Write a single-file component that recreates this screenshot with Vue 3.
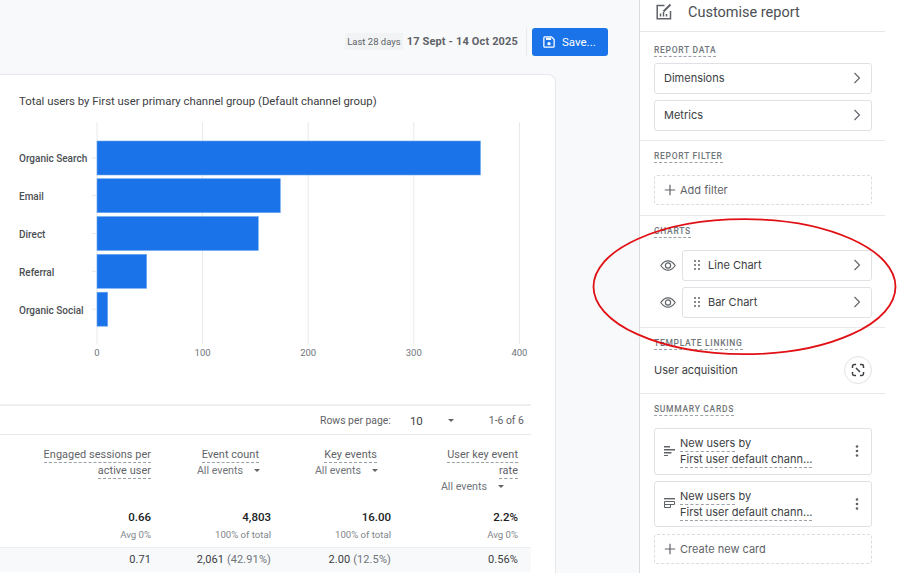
<script setup>
const bars = [
  { label: 'Organic Search', y: 141, end: 480.5, base: 162 },
  { label: 'Email', y: 178.7, end: 280.3, base: 200 },
  { label: 'Direct', y: 216.5, end: 258.3, base: 238 },
  { label: 'Referral', y: 254.3, end: 146.7, base: 276 },
  { label: 'Organic Social', y: 292.2, end: 107.7, base: 314 },
]
const ticks = [
  { label: '0', x: 97 },
  { label: '100', x: 202.6 },
  { label: '200', x: 308.2 },
  { label: '300', x: 413.8 },
  { label: '400', x: 519.4 },
]
const columns = [
  { lines: ['Engaged sessions per', 'active user'], total: '0.66', sub: 'Avg 0%', value: '0.71', pct: '' },
  { lines: ['Event count'], select: true, inset: 'inset-a', total: '4,803', sub: '100% of total', value: '2,061', pct: '(42.91%)' },
  { lines: ['Key events'], select: true, inset: 'inset-b', total: '16.00', sub: '100% of total', value: '2.00', pct: '(12.5%)' },
  { lines: ['User key event', 'rate'], select: true, selectInset: 'inset-c', total: '2.2%', sub: 'Avg 0%', value: '0.56%', pct: '' },
]
const charts = ['Line Chart', 'Bar Chart']
</script>

<template>
  <div class="page">
    <div class="frame">
      <main class="main">
        <div class="toolbar">
          <span class="chip">Last 28 days</span>
          <span class="dates">17 Sept - 14 Oct 2025</span>
          <span class="tool-divider"></span>
          <button class="save">
            <svg width="12" height="12" viewBox="0 0 14 14">
              <path d="M2 1h8l3 3v8a1 1 0 0 1-1 1H2a1 1 0 0 1-1-1V2a1 1 0 0 1 1-1z" fill="none" stroke="#fff" stroke-width="1.5" />
              <rect x="3.5" y="2" width="6" height="2.6" fill="#fff" />
              <circle cx="7" cy="9" r="1.9" fill="#fff" />
            </svg>
            Save...
          </button>
        </div>

        <section class="card">
          <h2 class="chart-title">Total users by First user primary channel group (Default channel group)</h2>
          <svg class="chart" width="531" height="292" viewBox="0 112 531 292">
            <line v-for="t in ticks" :key="t.label" :x1="t.x" :x2="t.x" y1="122" y2="344" class="grid" />
            <g v-for="b in bars" :key="b.label">
              <line x1="92" x2="97" :y1="b.y + 17" :y2="b.y + 17" class="grid" />
              <rect x="97" :y="b.y" :width="b.end - 97" height="34" class="bar" />
              <text x="19" :y="b.base" class="cat">{{ b.label }}</text>
            </g>
            <text v-for="t in ticks" :key="'l' + t.label" :x="t.x" y="356" text-anchor="middle" class="tick">{{ t.label }}</text>
          </svg>

          <div class="pager">
            <span>Rows per page:</span>
            <span class="pager-size">10</span>
            <span class="caret pager-caret"></span>
            <span class="pager-range">1-6 of 6</span>
          </div>

          <div class="table">
            <div v-for="c in columns" :key="c.total" class="head">
              <div :class="['head-lines', c.inset]">
                <div v-for="l in c.lines" :key="l" class="head-line"><span class="dash">{{ l }}</span></div>
              </div>
              <div v-if="c.select" :class="['select', c.inset, c.selectInset]">All events<span class="caret"></span></div>
            </div>
            <div v-for="c in columns" :key="'t' + c.total" class="total">
              <strong>{{ c.total }}</strong>
              <small>{{ c.sub }}</small>
            </div>
            <div class="row">
              <div v-for="c in columns" :key="'r' + c.total" class="cell">
                {{ c.value }} <span v-if="c.pct" class="pct">{{ c.pct }}</span>
              </div>
            </div>
          </div>
        </section>
      </main>

      <aside class="panel">
        <header class="panel-head">
          <svg width="18" height="18" viewBox="0 0 18 18" fill="none" stroke="#5f6368">
            <path d="M9.5 2.5H2.2v13.3h13.3V8" stroke-width="1.5" />
            <path d="M8.5 8.5l7-7" stroke-width="2" />
            <path d="M5.5 13.5v-3M8.5 13.5v-4.5M11.5 13.5v-2.5" stroke-width="1.5" />
          </svg>
          <h1>Customise report</h1>
        </header>

        <section class="group g-data">
          <div class="label"><span class="dash">REPORT DATA</span></div>
          <div class="box nav">Dimensions
            <svg class="chev" width="9" height="12" viewBox="0 0 9 12"><path d="M1.5 1l5 5-5 5" /></svg>
          </div>
          <div class="box nav">Metrics
            <svg class="chev" width="9" height="12" viewBox="0 0 9 12"><path d="M1.5 1l5 5-5 5" /></svg>
          </div>
        </section>

        <section class="group g-filter">
          <div class="label"><span class="dash">REPORT FILTER</span></div>
          <div class="box add">
            <svg class="plus" width="12" height="12" viewBox="0 0 12 12"><path d="M6 .8v10.4M.8 6h10.4" /></svg>
            Add filter
          </div>
        </section>

        <section class="group g-charts">
          <div class="label"><span class="dash">CHARTS</span></div>
          <div v-for="c in charts" :key="c" class="chart-row">
            <svg width="16" height="11" viewBox="0 0 16 11" fill="none" stroke="#5f6368" stroke-width="1.2">
              <path d="M.8 5.5C3 2.3 5.3.8 8 .8s5 1.5 7.2 4.7C13 8.7 10.7 10.2 8 10.2S3 8.7.8 5.5z" />
              <circle cx="8" cy="5.5" r="2.6" />
            </svg>
            <div class="box nav chart-box">
              <span class="chart-name">
                <svg width="6" height="10" viewBox="0 0 6 10" fill="#5f6368">
                  <circle cx="1" cy="1" r="1" /><circle cx="5" cy="1" r="1" />
                  <circle cx="1" cy="5" r="1" /><circle cx="5" cy="5" r="1" />
                  <circle cx="1" cy="9" r="1" /><circle cx="5" cy="9" r="1" />
                </svg>
                {{ c }}
              </span>
              <svg class="chev" width="9" height="12" viewBox="0 0 9 12"><path d="M1.5 1l5 5-5 5" /></svg>
            </div>
          </div>
        </section>

        <section class="group g-link">
          <div class="label"><span class="dash">TEMPLATE LINKING</span></div>
          <div class="link-row">
            <span>User acquisition</span>
            <span class="link-btn">
              <svg width="14" height="14" viewBox="0 0 14 14" fill="none" stroke="#3c4043" stroke-width="1.5">
                <path d="M5 1.5H3.2A1.7 1.7 0 0 0 1.5 3.2V5M9 1.5h1.8a1.7 1.7 0 0 1 1.7 1.7V5M1.5 9v1.8a1.7 1.7 0 0 0 1.7 1.7H5M12.5 9v1.8a1.7 1.7 0 0 1-1.7 1.7H9M5 5l4 4" />
              </svg>
            </span>
          </div>
        </section>

        <section class="group g-cards">
          <div class="label"><span class="dash">SUMMARY CARDS</span></div>
          <div class="box summary">
            <svg width="11" height="10" viewBox="0 0 11 10" fill="#5f6368">
              <rect x="0" y="0" width="6" height="1.5" /><rect x="0" y="3" width="11" height="1.5" />
              <rect x="0" y="6" width="7.5" height="1.5" /><rect x="0" y="9" width="4" height="1" />
            </svg>
            <div class="summary-text">
              <div><span class="dash">New users</span> by</div>
              <div><span class="dash">First user default chann...</span></div>
            </div>
            <svg class="kebab" width="4" height="12" viewBox="0 0 4 12" fill="#5f6368">
              <circle cx="2" cy="1.5" r="1.3" /><circle cx="2" cy="6" r="1.3" /><circle cx="2" cy="10.5" r="1.3" />
            </svg>
          </div>
          <div class="box summary">
            <svg width="11" height="11" viewBox="0 0 11 11" fill="none" stroke="#5f6368">
              <path d="M0 .7h11" stroke-width="1.4" />
              <path d="M.5 3.5h10v3H.5zM.5 6.5h6v3h-6z" stroke-width="1" />
            </svg>
            <div class="summary-text">
              <div><span class="dash">New users</span> by</div>
              <div><span class="dash">First user default chann...</span></div>
            </div>
            <svg class="kebab" width="4" height="12" viewBox="0 0 4 12" fill="#5f6368">
              <circle cx="2" cy="1.5" r="1.3" /><circle cx="2" cy="6" r="1.3" /><circle cx="2" cy="10.5" r="1.3" />
            </svg>
          </div>
          <div class="box add create">
            <svg class="plus" width="12" height="12" viewBox="0 0 12 12"><path d="M6 .8v10.4M.8 6h10.4" /></svg>
            Create new card
          </div>
        </section>
      </aside>
    </div>

    <svg class="callout" width="904" height="582" viewBox="0 0 904 582">
      <ellipse cx="744.5" cy="286.7" rx="151" ry="67.5" />
    </svg>
  </div>
</template>

<style>
html, body { margin: 0; background: #fff; }
</style>

<style scoped>
.page {
  position: relative;
  width: 904px;
  height: 582px;
  overflow: hidden;
  background: #fff;
  font-family: Roboto, "Liberation Sans", sans-serif;
  color: #3c4043;
}
.frame { display: flex; height: 573px; }
.main {
  width: 639px;
  flex: none;
  display: flex;
  flex-direction: column;
  background: #f8f9fa;
  overflow: hidden;
}
.toolbar {
  height: 74px;
  flex: none;
  box-sizing: border-box;
  padding: 28px 31px 0 0;
  display: flex;
  justify-content: flex-end;
  align-items: flex-start;
}
.chip {
  margin-top: 5px;
  height: 17px;
  line-height: 17px;
  padding: 0 2px;
  background: #f1f3f4;
  font-size: 9.5px;
  color: #5f6368;
  white-space: nowrap;
}
.dates {
  margin: 5px 8px 0 4px;
  line-height: 17px;
  font-size: 11px;
  font-weight: 700;
  letter-spacing: .15px;
  color: #5f6368;
  white-space: nowrap;
}
.tool-divider { width: 1px; height: 28px; background: #e8eaed; margin-right: 5px; }
.save {
  width: 76px;
  height: 28px;
  border: 0;
  border-radius: 3px;
  padding: 0 0 0 11px;
  display: flex;
  align-items: center;
  gap: 7px;
  background: #1a73e8;
  color: #fff;
  font: 400 11.5px Roboto, sans-serif;
}
.card {
  width: 566px;
  margin-left: -10px;
  flex: 1;
  box-sizing: border-box;
  background: #fff;
  border: 1px solid #e6e8eb;
  border-bottom: 0;
  border-radius: 8px 8px 0 0;
}
.chart-title {
  margin: 0;
  padding: 19px 0 0 28px;
  font-size: 11.35px;
  font-weight: 400;
  line-height: 14px;
  height: 18px;
  color: #3c4043;
}
.chart { display: block; margin-left: 9px; }
.grid { stroke: #e6e8ea; stroke-width: 1; }
.bar { fill: #1a73e8; stroke: #6ea8f2; stroke-width: .6; }
.cat { font-size: 10px; font-weight: 500; fill: #4b4f54; }
.tick { font-size: 9.5px; fill: #70757a; }
.pager {
  width: 540px;
  height: 31px;
  box-sizing: border-box;
  border-top: 2px solid #eeeff0;
  border-bottom: 1px solid #e8eaed;
  padding: 1px 0 0 329px;
  display: flex;
  align-items: center;
  font-size: 10.4px;
  color: #5f6368;
}
.pager-size { margin-left: 19px; font-size: 11.5px; color: #3c4043; }
.pager-caret { margin-left: 25px; border-left-width: 4px; border-right-width: 4px; }
.pager-range { margin-left: 35px; }
.caret {
  display: inline-block;
  width: 0;
  height: 0;
  border-left: 3.5px solid transparent;
  border-right: 3.5px solid transparent;
  border-top: 3.5px solid #5f6368;
}
.table {
  width: 540px;
  display: grid;
  grid-template-columns: 160px 120px 120px 127px 13px;
  font-size: 10.9px;
}
.head { padding-top: 12px; height: 73px; box-sizing: border-box; text-align: right; }
.head-line { line-height: 16px; height: 16px; color: #5f6368; letter-spacing: .05px; }
.dash { border-bottom: 1px dashed #9aa0a6; padding-bottom: 1px; }
.inset-a { padding-right: 12px; }
.inset-b { padding-right: 14px; }
.inset-c { padding-right: 15px; }
.select { line-height: 16px; color: #70757a; white-space: nowrap; font-size: 10.7px; }
.select .caret { margin: 0 -1px 0 11px; vertical-align: 2px; }
.total {
  height: 39px;
  padding-top: 1px;
  box-sizing: border-box;
  text-align: right;
  grid-row: 2;
}
.total strong { display: block; line-height: 17px; font-size: 11.5px; font-weight: 500; color: #202124; }
.total small { display: block; line-height: 17px; font-size: 9.6px; color: #80868b; }
.row {
  grid-column: 1 / -1;
  grid-row: 3;
  display: grid;
  grid-template-columns: 160px 120px 120px 127px;
  height: 25px;
  background: #f8f9fa;
  border-top: 1px solid #eceef0;
  box-sizing: border-box;
}
.cell { text-align: right; line-height: 23px; font-size: 11px; letter-spacing: .1px; color: #3c4043; }
.pct { color: #70757a; }

.panel {
  width: 246px;
  flex: none;
  box-sizing: border-box;
  border-left: 1px solid #dadce0;
  font-family: Inter, Roboto, sans-serif;
}
.panel-head {
  height: 32px;
  box-sizing: border-box;
  border-bottom: 1px solid #e4e6e8;
  padding: 0 0 7px 15px;
  display: flex;
  align-items: center;
  gap: 15px;
}
.panel-head h1 {
  margin: 0;
  font: 400 14.5px Roboto, sans-serif;
  color: #4b4f54;
}
.group { padding: 9px 13px 0 14px; border-bottom: 1px solid #e8eaed; box-sizing: border-box; }
.g-data { height: 109px; padding-top: 12px; }
.g-filter { height: 75px; }
.g-charts { height: 112px; }
.g-link { height: 66px; }
.g-cards { height: 180px; border-bottom: 0; }
.label {
  height: 12px;
  font: 500 8.5px/12px Roboto, sans-serif;
  letter-spacing: .7px;
  color: #70757a;
  margin-bottom: 7px;
}
.box {
  box-sizing: border-box;
  border: 1px solid #dfe1e5;
  border-radius: 3px;
  font-size: 11px;
  color: #3c4043;
  background: #fff;
}
.nav {
  height: 30.5px;
  padding: 0 9px;
  margin-bottom: 6.5px;
  display: flex;
  justify-content: space-between;
  align-items: center;
}
.chev { fill: none; stroke: #5f6368; stroke-width: 1.1; }
.add {
  height: 30px;
  border: 1px dashed #dadce0;
  padding-left: 9px;
  display: flex;
  align-items: center;
  gap: 4px;
  color: #5f6368;
}
.g-filter .add { margin-top: 13px; }
.plus { fill: none; stroke: #5f6368; stroke-width: 1.2; }
.g-charts .label { margin-bottom: 13px; }
.chart-row { display: flex; align-items: center; height: 30.5px; margin-bottom: 6.5px; }
.chart-row > svg { margin: 0 6px; flex: none; }
.chart-box { flex: 1; margin-bottom: 0; padding-left: 11px; }
.chart-name { display: inline-flex; align-items: center; gap: 8px; }
.link-row {
  display: flex;
  justify-content: space-between;
  align-items: center;
  font-size: 11px;
}
.link-btn {
  width: 28px;
  height: 28px;
  box-sizing: border-box;
  border: 1px solid #e0e2e5;
  border-radius: 50%;
  display: flex;
  align-items: center;
  justify-content: center;
}
.g-cards .label { margin-bottom: 13px; }
.summary {
  height: 46.5px;
  margin-bottom: 6px;
  padding-left: 9px;
  display: flex;
  align-items: center;
  gap: 5px;
}
.summary-text { flex: 1; line-height: 16px; }
.kebab { margin-right: 12px; }
.create { margin-top: 7px; }
.callout {
  position: absolute;
  left: 0;
  top: 0;
  pointer-events: none;
}
.callout ellipse { fill: none; stroke: #e01015; stroke-width: 1.8; }
</style>
